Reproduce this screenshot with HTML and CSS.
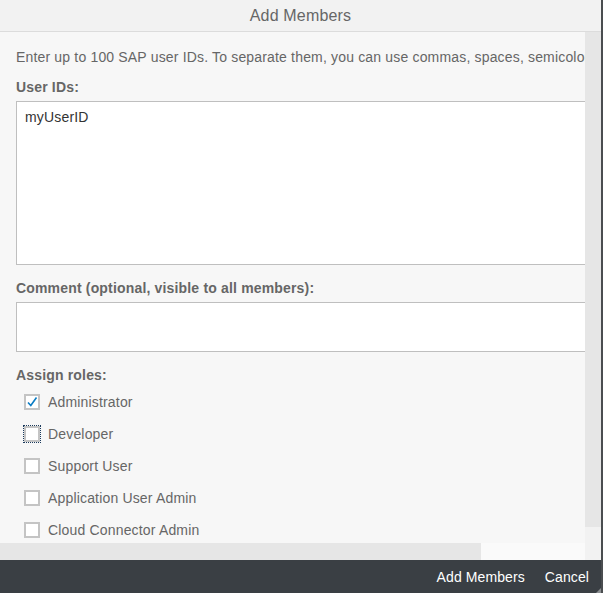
FILE: index.html
```html
<!DOCTYPE html>
<html>
<head>
<meta charset="utf-8">
<link rel="stylesheet" href="styles.css">
</head>
<body>
<div class="dialog">
  <div class="header">Add Members</div>
  <div class="main">
    <div class="viewport">
      <div class="content">
        <p class="intro">Enter up to 100 SAP user IDs. To separate them, you can use commas, spaces, semicolons, or line breaks.</p>
        <div class="label">User IDs:</div>
        <div class="textarea">myUserID</div>
        <div class="label">Comment (optional, visible to all members):</div>
        <div class="input"></div>
        <div class="label roles-label">Assign roles:</div>
        <ul class="roles">
          <li class="role"><span class="box checked"><svg width="12" height="12" viewBox="0 0 12 12"><path d="M2 6.5 L4.8 9.5 L10.5 1.5" fill="none" stroke="#0a7cc4" stroke-width="1.6"/></svg></span><span class="role-text">Administrator</span></li>
          <li class="role"><span class="box focused"></span><span class="role-text">Developer</span></li>
          <li class="role"><span class="box"></span><span class="role-text">Support User</span></li>
          <li class="role"><span class="box"></span><span class="role-text">Application User Admin</span></li>
          <li class="role"><span class="box"></span><span class="role-text">Cloud Connector Admin</span></li>
        </ul>
      </div>
    </div>
    <div class="vscroll"><div class="vthumb"></div></div>
  </div>
  <div class="hscroll-row">
    <div class="htrack"><div class="hthumb"></div></div>
    <div class="corner"></div>
  </div>
  <div class="footer">
    <span class="btn">Add Members</span>
    <span class="btn">Cancel</span>
    <span class="grip"></span>
  </div>
</div>
</body>
</html>
```

FILE: styles.css
```css
html, body {
  margin: 0;
  padding: 0;
  background: #f7f7f7;
}
body {
  font-family: "Liberation Sans", Arial, sans-serif;
  font-size: 14px;
  letter-spacing: 0.17px;
  color: #666;
}
.dialog {
  width: 601px;
  height: 593px;
  border-right: 2px solid #4a4d50;
  display: flex;
  flex-direction: column;
  overflow: hidden;
}
.header {
  height: 31px;
  line-height: 31px;
  flex: none;
  background: #f2f2f2;
  border-bottom: 1px solid #dcdcdc;
  text-align: center;
  font-size: 16px;
  color: #666;
}
.main {
  flex: none;
  height: 511px;
  display: flex;
}
.viewport {
  flex: 1;
  overflow: hidden;
  background: #f7f7f7;
}
.content {
  width: 760px;
  padding: 16px 0 0 16px;
}
.intro {
  margin: 0 0 12px;
  line-height: 18px;
  white-space: nowrap;
  color: #666;
}
.label {
  font-weight: bold;
  line-height: 18px;
  margin-bottom: 5px;
  color: #666;
}
.textarea {
  height: 148px;
  background: #fff;
  border: 1px solid #bfbfbf;
  padding: 7px 8px;
  line-height: 16px;
  color: #333;
  margin-bottom: 14px;
}
.input {
  height: 48px;
  background: #fff;
  border: 1px solid #bfbfbf;
  margin-bottom: 14px;
}
.roles-label {
  margin-bottom: 2px;
}
.roles {
  list-style: none;
  margin: 0;
  padding: 0 0 0 8px;
}
.role {
  height: 32px;
  display: flex;
  align-items: center;
  gap: 8px;
}
.box {
  width: 12px;
  height: 12px;
  border: 2px solid #c4c4c4;
  background: #fff;
  display: flex;
  align-items: center;
  justify-content: center;
  margin-top: -1px;
}
.box.focused {
  outline: 1px dotted #1a3a5c;
  outline-offset: 0;
}
.role-text {
  color: #666;
}
.vscroll {
  width: 16px;
  flex: none;
  background: #f2f2f2;
}
.vthumb {
  height: 495px;
  background: #e6e6e6;
}
.hscroll-row {
  flex: none;
  height: 17px;
  display: flex;
}
.htrack {
  flex: 1;
  background: #fafafa;
}
.hthumb {
  width: 481px;
  height: 100%;
  background: #e6e6e6;
}
.corner {
  width: 16px;
  background: #f2f2f2;
}
.footer {
  flex: none;
  height: 33px;
  background: #3a3f44;
  display: flex;
  align-items: center;
  justify-content: flex-end;
  gap: 20px;
  padding-right: 12px;
  position: relative;
}
.btn {
  color: #fff;
  font-size: 14px;
  letter-spacing: 0.1px;
}
.grip {
  position: absolute;
  right: 0;
  bottom: 0;
  width: 0;
  height: 0;
  border-left: 5px solid transparent;
  border-bottom: 5px solid #8a8d90;
}
```
